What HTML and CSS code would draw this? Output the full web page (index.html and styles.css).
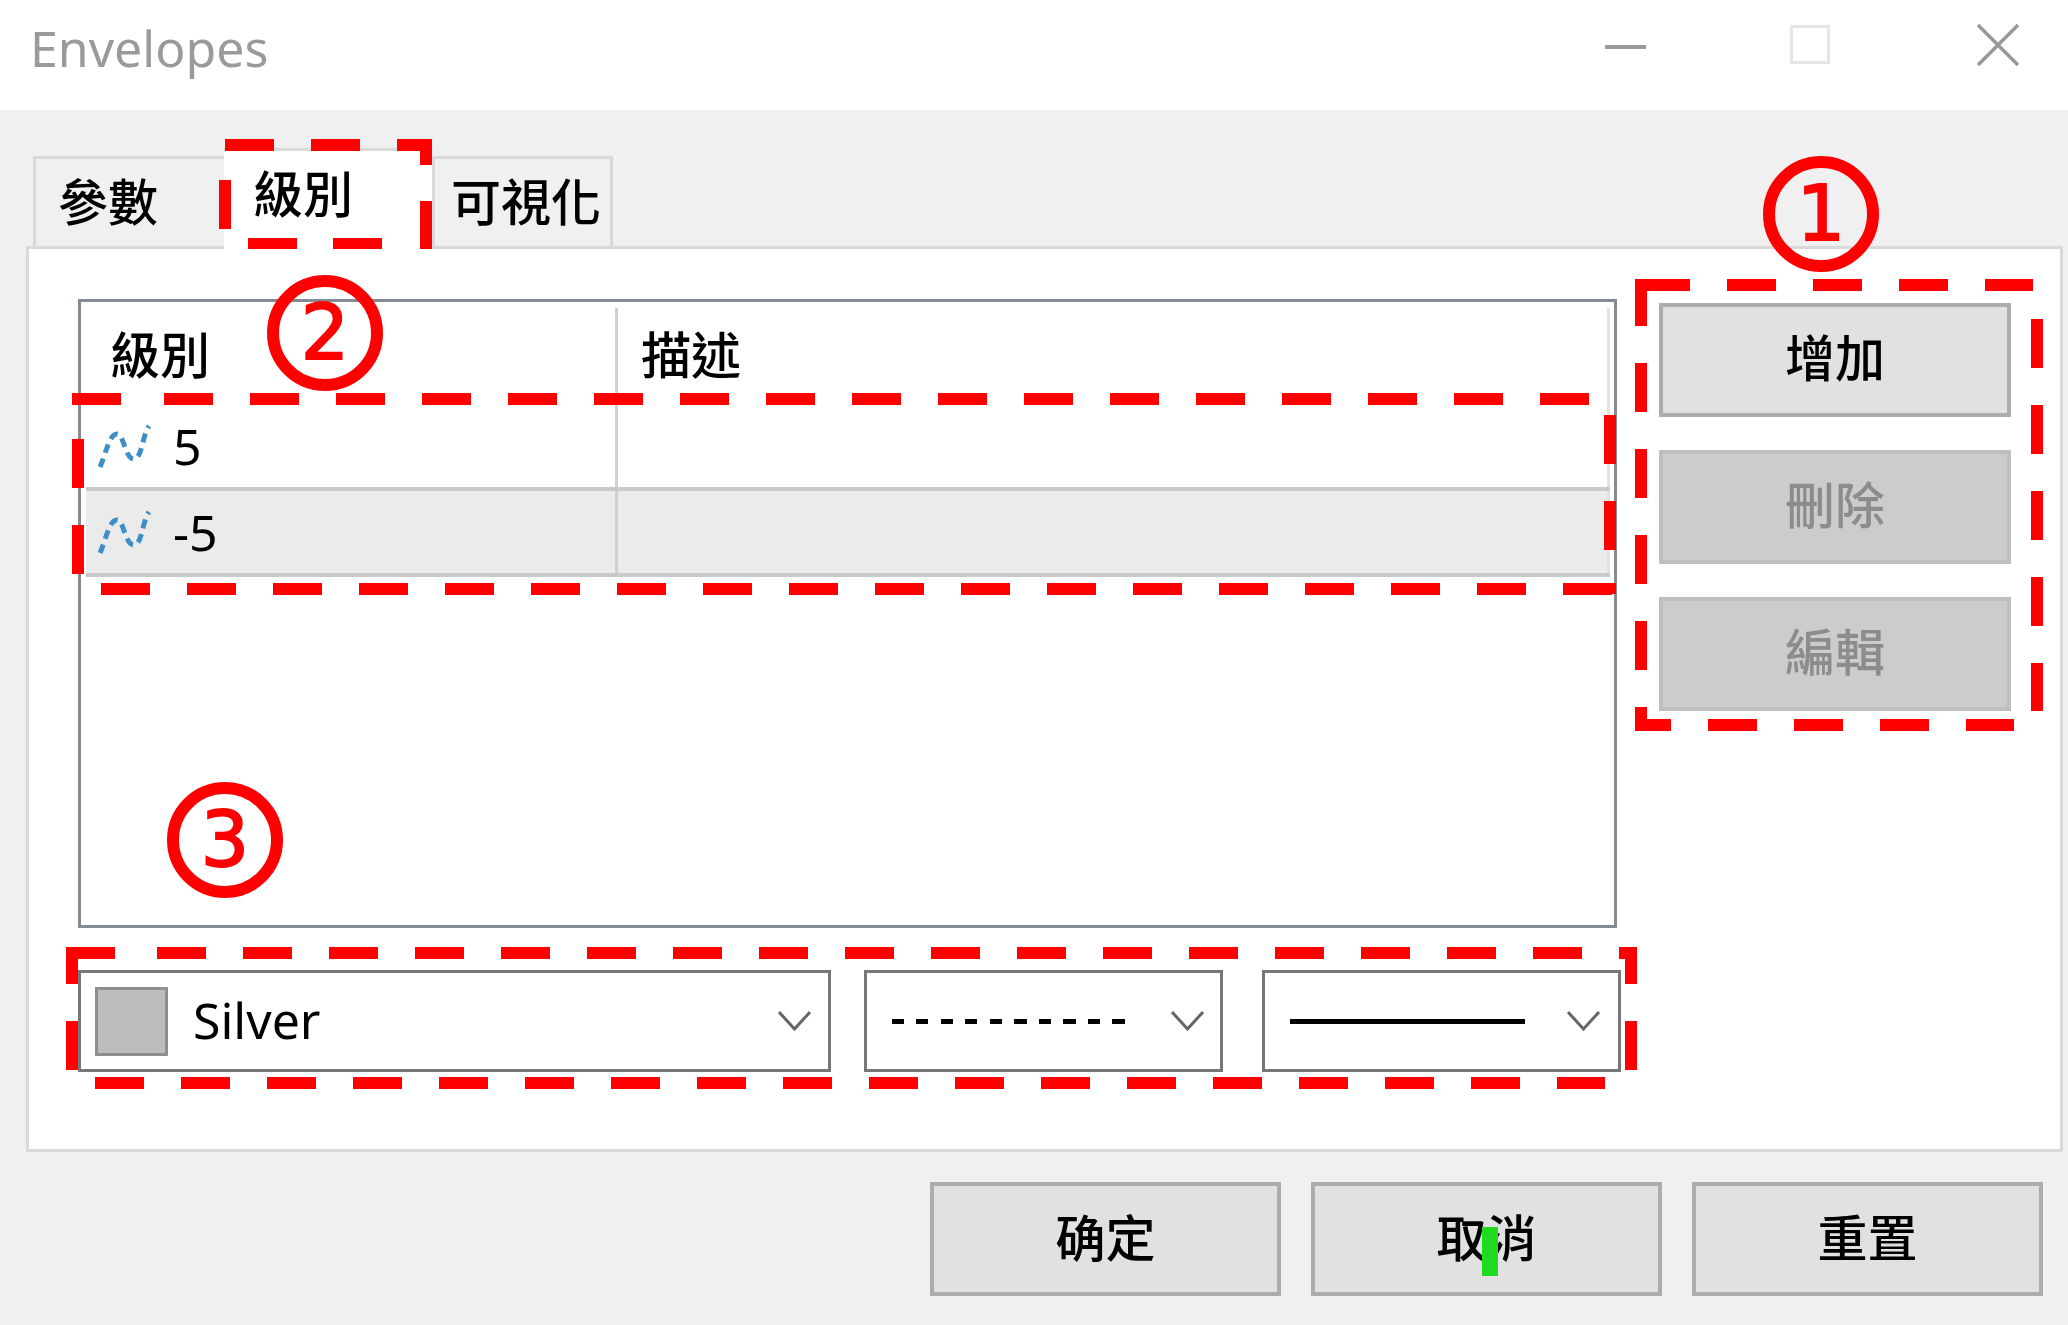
FILE: index.html
```html
<!DOCTYPE html>
<html lang="zh-Hant">
<head>
    <meta charset="UTF-8">
    <meta name="viewport" content="width=device-width, initial-scale=1.0">
    <title>Envelopes</title>
    <link rel="stylesheet" href="styles.css">
</head>
<body>
    <div class="window">
        <div class="titlebar">
            <span class="title">Envelopes</span>
            <div class="win-btn minimize-btn"></div>
            <div class="win-btn maximize-btn"></div>
            <svg class="win-btn close-btn" width="42" height="42" viewBox="0 0 42 42">
                <path d="M1 1L41 41M41 1L1 41" stroke="#999" stroke-width="3.5" fill="none"/>
            </svg>
        </div>

        <div class="content">
            <div class="tabs">
                <div class="tab">參數</div>
                <div class="tab active">級別</div>
                <div class="tab">可視化</div>
            </div>

            <div class="panel">
                <div class="panel-left">
                    <div class="levels">
                        <div class="levels-row levels-head">
                            <div class="cell cell-first">級別</div>
                            <div class="cell">描述</div>
                        </div>
                        <div class="levels-row">
                            <div class="cell cell-first">
                                <svg class="line-icon" width="54" height="45" viewBox="0 0 54 45"><path d="M2 43C8 30 11 10 19 10C26 10 27 35 36 35C44 35 44 12 51 2" fill="none" stroke="#3f8fc6" stroke-width="5" stroke-dasharray="9 6"/></svg>
                                <span>5</span>
                            </div>
                            <div class="cell"></div>
                        </div>
                        <div class="levels-row selected">
                            <div class="cell cell-first">
                                <svg class="line-icon" width="54" height="45" viewBox="0 0 54 45"><path d="M2 43C8 30 11 10 19 10C26 10 27 35 36 35C44 35 44 12 51 2" fill="none" stroke="#3f8fc6" stroke-width="5" stroke-dasharray="9 6"/></svg>
                                <span>-5</span>
                            </div>
                            <div class="cell"></div>
                        </div>
                    </div>

                    <div class="selects">
                        <div class="select select-color">
                            <div class="swatch"></div>
                            <span class="select-text">Silver</span>
                            <svg class="chevron" width="33" height="20" viewBox="0 0 33 20"><path d="M1 1L16.500 18L32 1" fill="none" stroke="#666" stroke-width="3"/></svg>
                        </div>
                        <div class="select select-style">
                            <div class="line-sample dashed"></div>
                            <svg class="chevron" width="33" height="20" viewBox="0 0 33 20"><path d="M1 1L16.500 18L32 1" fill="none" stroke="#666" stroke-width="3"/></svg>
                        </div>
                        <div class="select select-style">
                            <div class="line-sample solid"></div>
                            <svg class="chevron" width="33" height="20" viewBox="0 0 33 20"><path d="M1 1L16.500 18L32 1" fill="none" stroke="#666" stroke-width="3"/></svg>
                        </div>
                    </div>
                </div>

                <div class="side-buttons">
                    <div class="btn">增加</div>
                    <div class="btn disabled">刪除</div>
                    <div class="btn disabled">編輯</div>
                </div>
            </div>

            <div class="actions">
                <div class="btn action">确定</div>
                <div class="btn action">取消</div>
                <div class="btn action">重置</div>
            </div>
        </div>
    </div>

    <!-- red markup drawn on top of the dialog -->
    <svg class="marks" width="2068" height="1325" viewBox="0 0 2068 1325">
        <g class="dash">
            <!-- box 1: side buttons -->
            <path d="M1641 285H2033"/>
            <path d="M1641 279V731" stroke-dashoffset="2"/>
            <path d="M2037 319V711"/>
            <path d="M1635 725H2014" stroke-dashoffset="13"/>
            <!-- box 2: level rows -->
            <path d="M72 399H128"/>
            <path d="M164 399H1589"/>
            <path d="M78 439V574"/>
            <path d="M101 589H1612"/>
            <path d="M1610 415V550"/>
            <!-- box 3: selects -->
            <path d="M66 953H121"/>
            <path d="M157 953H1637"/>
            <path d="M72 947V1070" stroke-dashoffset="12"/>
            <path d="M95 1083H1605"/>
            <path d="M1631 947V1073" stroke-dashoffset="12"/>
        </g>
        <g fill="#ff0000">
            <!-- tab box -->
            <rect x="225" y="139" width="49" height="12"/>
            <rect x="311" y="139" width="49" height="12"/>
            <rect x="397" y="139" width="35" height="12"/>
            <rect x="420" y="139" width="12" height="26"/>
            <rect x="420" y="201" width="12" height="48"/>
            <rect x="219" y="180" width="12" height="49"/>
            <rect x="248" y="238" width="49" height="11"/>
            <rect x="333" y="238" width="49" height="11"/>
            <rect x="420" y="238" width="12" height="11"/>
            <rect x="1604" y="583" width="12" height="11"/>
        </g>
    </svg>
    <div class="badge badge-1">1</div>
    <div class="badge badge-2">2</div>
    <div class="badge badge-3">3</div>
    <div class="cursor-mark"></div>
</body>
</html>
```

FILE: styles.css
```css
body {
    margin: 0;
    padding: 0;
    width: 2068px;
    height: 1325px;
    overflow: hidden;
    position: relative;
    background-color: #f0f0f0;
    font-family: "Noto Sans", "Noto Sans CJK TC", sans-serif;
    font-size: 50px;
    font-weight: 500;
    color: #000;
}

.titlebar {
    display: flex;
    align-items: flex-start;
    height: 110px;
    box-sizing: border-box;
    padding-left: 30px;
    background-color: #fff;
}
.title {
    font-size: 50px;
    font-weight: 400;
    line-height: 96px;
    color: #9a9a9a;
    margin-right: auto;
}
.win-btn {
    flex: none;
}
.minimize-btn {
    width: 41px;
    height: 4px;
    margin-top: 45px;
    background-color: #999;
}
.maximize-btn {
    width: 40px;
    height: 39px;
    box-sizing: border-box;
    margin-top: 25px;
    margin-left: 144px;
    border: 3px solid #e6e6e6;
}
.close-btn {
    margin-top: 24px;
    margin-left: 147px;
    margin-right: 49px;
}

.content {
    padding: 38px 5px 0 26px;
}

.tabs {
    display: flex;
    align-items: flex-end;
    height: 102px;
    margin-left: 7px;
    margin-bottom: -4px;
    position: relative;
    z-index: 1;
}
.tab {
    box-sizing: border-box;
    height: 91px;
    margin-bottom: 3px;
    padding: 10px 0 0 22px;
    border: 3px solid #d9d9d9;
    border-bottom: none;
    border-right: none;
    line-height: 66px;
    width: 191px;
}
.tab:last-child {
    width: 181px;
    padding-left: 16px;
    border-right: 3px solid #d9d9d9;
}
.tab.active {
    width: 208px;
    height: 102px;
    margin-bottom: 0;
    padding: 10px 0 0 29px;
    border: none;
    border-top: 3px solid #d9d9d9;
    background-color: #fff;
}

.panel {
    display: flex;
    box-sizing: border-box;
    height: 906px;
    padding: 50px 0 0 49px;
    border: 3px solid #d9d9d9;
    background-color: #fff;
}
.panel-left {
    width: 1543px;
}

.levels {
    box-sizing: border-box;
    width: 1539px;
    height: 629px;
    padding: 6px 4px 0 5px;
    border: 3px solid #858b94;
}
.levels-row {
    display: flex;
    height: 86px;
    box-sizing: border-box;
    border-bottom: 4px solid #c9c9c9;
}
.levels-head {
    height: 97px;
    border-bottom: none;
}
.cell {
    flex: 1;
    display: flex;
    align-items: center;
    padding-left: 23px;
    border-right: 3px solid #e3e3e3;
}
.levels-head .cell {
    padding-bottom: 8px;
}
.cell-first {
    flex: none;
    width: 532px;
    box-sizing: border-box;
    border-right-color: #d0d0d0;
}
.levels-row .cell-first {
    padding-left: 12px;
}
.levels-head .cell-first {
    padding-left: 24px;
}
.selected {
    background-color: #ebebeb;
}
.line-icon {
    flex: none;
    margin-right: 21px;
}
.levels-row span {
    font-size: 50px;
    font-weight: 400;
}

.selects {
    display: flex;
    margin-top: 41px;
    width: 1543px;
    gap: 33px;
}
.select {
    display: flex;
    align-items: center;
    box-sizing: border-box;
    height: 102px;
    margin-top: 1px;
    border: 3px solid #777;
    width: 753px;
    padding: 0 17px 0 14px;
}
.select-style {
    width: 359px;
    padding: 0 16px 0 25px;
}
.select-style:last-child {
    margin-left: 6px;
    padding-right: 18px;
}
.swatch {
    box-sizing: border-box;
    width: 73px;
    height: 69px;
    margin-right: 25px;
    background-color: #bdbdbd;
    border: 3px solid #8f8f8f;
}
.select-text {
    font-size: 50px;
    font-weight: 400;
    padding-bottom: 2px;
}
.chevron {
    margin-left: auto;
    flex: none;
}
.line-sample {
    width: 235px;
}
.dashed {
    height: 5px;
    background-image: repeating-linear-gradient(90deg, #000 0, #000 12px, transparent 12px, transparent 24.500px);
}
.solid {
    height: 5px;
    background-color: #000;
}

.side-buttons {
    display: flex;
    flex-direction: column;
    gap: 33px;
    margin-left: 38px;
    margin-top: 4px;
}
.btn {
    display: flex;
    align-items: center;
    justify-content: center;
    box-sizing: border-box;
    width: 352px;
    height: 114px;
    padding-bottom: 9px;
    background-color: #e1e1e1;
    border: 4px solid #adadad;
}
.btn.disabled {
    background-color: #ccc;
    border-color: #bfbfbf;
    color: #8c8c8c;
}

.actions {
    display: flex;
    justify-content: flex-end;
    gap: 30px;
    margin-top: 30px;
    padding-right: 20px;
}
.btn.action {
    width: 351px;
    padding-bottom: 8px;
}

/* markup */
.marks {
    position: absolute;
    left: 0;
    top: 0;
    z-index: 5;
}
.dash path {
    fill: none;
    stroke: #ff0000;
    stroke-width: 12;
    stroke-dasharray: 49 37;
}
.badge {
    position: absolute;
    z-index: 6;
    box-sizing: border-box;
    width: 116px;
    height: 116px;
    border: 12px solid #ff0000;
    border-radius: 50%;
    display: flex;
    align-items: center;
    justify-content: center;
    color: #ff0000;
    font-family: "DejaVu Sans", sans-serif;
    font-size: 76px;
    font-weight: 400;
    -webkit-text-stroke: 2px #ff0000;
    line-height: 1;
}
.badge-1 { left: 1763px; top: 156px; }
.badge-2 { left: 267px; top: 275px; }
.badge-3 { left: 167px; top: 782px; }
.cursor-mark {
    position: absolute;
    z-index: 4;
    left: 1482px;
    top: 1227px;
    width: 16px;
    height: 49px;
    background-color: #1fdc1f;
}
```
